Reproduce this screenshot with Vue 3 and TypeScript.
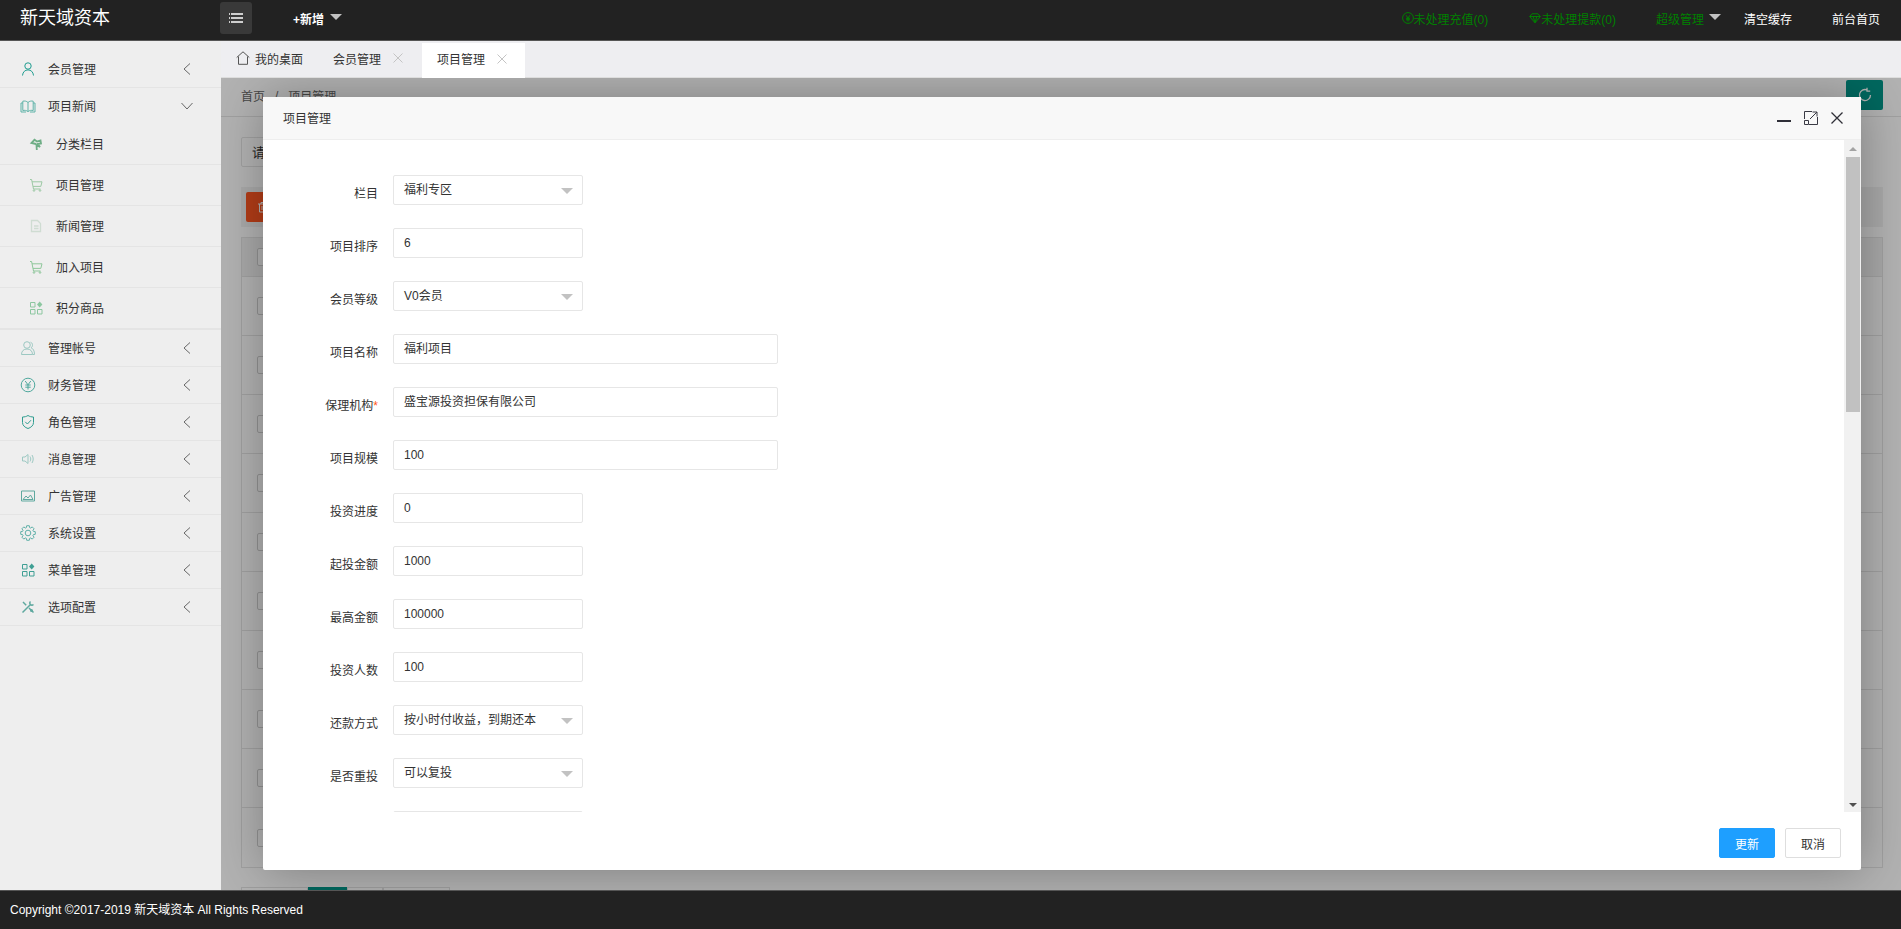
<script setup lang="ts">
interface MenuItem {
  label: string;
  icon: string;
  color: string;
}

interface FormRow {
  label: string;
  value: string;
  kind: "select" | "short" | "long";
  required?: boolean;
}

// cog outline, 8 teeth
function gearPath(): string {
  const pts: string[] = [];
  for (let i = 0; i < 8; i++) {
    const a = (i * Math.PI) / 4;
    for (const [off, r] of [[-0.3, 5.6], [-0.18, 7.4], [0.18, 7.4], [0.3, 5.6]]) {
      const x = 8 + r * Math.cos(a + off);
      const y = 8 + r * Math.sin(a + off);
      pts.push(`${x.toFixed(2)} ${y.toFixed(2)}`);
    }
  }
  return `M${pts.join("L")}z`;
}

const icons: Record<string, string> = {
  user: '<circle cx="8" cy="5" r="3.2"/><path d="M2.5 14.5c.3-3.6 2.6-5.6 5.5-5.6s5.200 2 5.500 5.600"/>',
  book: '<path d="M8 4.500C6.500 3 4.500 2.800 2.800 3.200v9.300c1.700-.4 3.700-.2 5.200 1.100 1.500-1.300 3.500-1.500 5.200-1.100V3.200C11.500 2.800 9.500 3 8 4.500zM8 4.500v9"/><path d="M2.800 5H1v9h5M13.200 5H15v9h-5"/>',
  palm: '<path d="M8 8 3.500 7l3-3.200L9 5.500 12.500 4.500 13 7.500 9.800 8 12 11 8.500 9 8.800 14" stroke-width="1.800"/>',
  cart: '<path d="M2 2.500h1.600L5.500 12h7M4 4.800h10l-1.200 4.600H5"/><circle cx="6" cy="13.500" r=".8"/><circle cx="12" cy="13.500" r=".8"/>',
  doc: '<path d="M3.500 2.500h6l3 3v8h-9zM6 8h4.500M6 10.500h4.500" stroke-width="1.300"/>',
  apps: '<path d="M2.500 2.500h4.500v4.500H2.500zM2.500 9.500h4.500V14H2.500zM9.500 9.500H14V14H9.500z"/><path d="M11.700 1.500 14.400 4.500 11.700 7.500 9 4.500z" fill="currentColor" stroke="none"/>',
  users: '<circle cx="7" cy="5" r="3.300"/><path d="M1.500 14.500c0-3.500 2.200-5.500 5.500-5.500s5.500 2 5.500 5.500zM10.500 2.200c2 .4 3 3.800 .6 5.600 2 .8 3.400 2.800 3.400 6.700h-2"/>',
  yen: '<circle cx="8" cy="8" r="6.800"/><path d="M5.200 4 8 7.800 10.800 4M8 7.800V12.500M5.300 8h5.400M5.300 10.200h5.400"/>',
  shield: '<path d="M8 1.500c1.500 1 3.500 1.500 5.500 1.500v5.500c0 3-2.500 5-5.500 6-3-1-5.500-3-5.500-6V3c2 0 4-.5 5.500-1.500z"/><path d="m5.200 7.800 2.200 2.200 3.600-3.800"/>',
  sound: '<path d="M2.500 6h2.500l3-2.500v9L5 10H2.500zM10 5.500c1 1.500 1 3.500 0 5M12 4c1.600 2.500 1.600 5.500 0 8"/>',
  image: '<path d="M1.500 3h13v10h-13z"/><path d="M3 11.500 6 8l2 2 2.500-3 2.500 4.500z"/>',
  gear: `<path d="${gearPath()}"/><circle cx="8" cy="8" r="2.800"/>`,
  tools: '<path d="m3 3 3.200 3.200M2.500 13.500l8-8M10.500 2.500c-1 1-1 2.200 0 3 .9.900 2 .9 3 0M9 9l4.500 4.500" stroke-width="1.500"/><circle cx="11.500" cy="11.500" r="1.500" fill="currentColor" stroke="none"/>',
};

const beforeGroup: MenuItem[] = [{ label: "会员管理", icon: "user", color: "#1f9d90" }];

const subItems: MenuItem[] = [
  { label: "分类栏目", icon: "palm", color: "#6fae86" },
  { label: "项目管理", icon: "cart", color: "#9cc9a4" },
  { label: "新闻管理", icon: "doc", color: "#cfdcd2" },
  { label: "加入项目", icon: "cart", color: "#8fc79b" },
  { label: "积分商品", icon: "apps", color: "#8cc7a0" },
];

const afterGroup: MenuItem[] = [
  { label: "管理帐号", icon: "users", color: "#9cc8c2" },
  { label: "财务管理", icon: "yen", color: "#4fa89d" },
  { label: "角色管理", icon: "shield", color: "#2f9d90" },
  { label: "消息管理", icon: "sound", color: "#9cc8c2" },
  { label: "广告管理", icon: "image", color: "#5fa99f" },
  { label: "系统设置", icon: "gear", color: "#5fb0a8" },
  { label: "菜单管理", icon: "apps", color: "#3f9f94" },
  { label: "选项配置", icon: "tools", color: "#5fa99f" },
];

const formRows: FormRow[] = [
  { label: "栏目", value: "福利专区", kind: "select" },
  { label: "项目排序", value: "6", kind: "short" },
  { label: "会员等级", value: "V0会员", kind: "select" },
  { label: "项目名称", value: "福利项目", kind: "long" },
  { label: "保理机构", value: "盛宝源投资担保有限公司", kind: "long", required: true },
  { label: "项目规模", value: "100", kind: "long" },
  { label: "投资进度", value: "0", kind: "short" },
  { label: "起投金额", value: "1000", kind: "short" },
  { label: "最高金额", value: "100000", kind: "short" },
  { label: "投资人数", value: "100", kind: "short" },
  { label: "还款方式", value: "按小时付收益，到期还本", kind: "select" },
  { label: "是否重投", value: "可以复投", kind: "select" },
  { label: "", value: "", kind: "short" },
];

const tableRows = Array.from({ length: 10 }, (_, i) => i);
</script>

<template>
  <div class="app">
    <header class="topbar">
      <div class="brand">新天域资本</div>
      <button class="menu-toggle">
        <svg width="16" height="12" viewBox="0 0 16 12" fill="none" stroke="#fff" stroke-width="1.500">
          <path d="M1 2h1M3 2h12M1 6h1M3 6h12M1 10h1M3 10h12" />
        </svg>
      </button>
      <div class="add-new">+新增<i class="caret" /></div>
      <div class="top-right">
        <span class="alert">
          <svg width="12" height="12" viewBox="0 0 12 12" fill="none" stroke="#008000">
            <circle cx="6" cy="6" r="5.400" />
            <path d="M4 3.200 6 6l2-2.800M6 6v3.500M4 6.300h4M4 7.800h4" />
          </svg>未处理充值(0)
        </span>
        <span class="alert second">
          <svg width="12" height="12" viewBox="0 0 12 12" fill="none" stroke="#008000">
            <path d="M3 1.800h6L11.300 4.500 6 10.800.7 4.500zM.7 4.500h10.600M4.200 4.500 6 10.800l1.800-6.300" />
          </svg>未处理提款(0)
        </span>
        <span class="admin">超级管理<i class="caret" /></span>
        <span class="plain first">清空缓存</span>
        <span class="plain">前台首页</span>
      </div>
    </header>

    <div class="main">
      <aside class="sidebar">
        <div v-for="item in beforeGroup" :key="item.label" class="nav-row first-row">
          <svg class="nav-icon" viewBox="0 0 16 16" fill="none" stroke="currentColor" :style="{ color: item.color }" v-html="icons[item.icon]" />
          <span class="nav-label">{{ item.label }}</span>
          <svg class="chevron" width="8" height="12" viewBox="0 0 8 12" fill="none" stroke="#666"><path d="M7 .5 1 6l6 5.500" /></svg>
        </div>
        <div class="nav-group">
          <div class="nav-row open">
            <svg class="nav-icon" viewBox="0 0 16 16" fill="none" stroke="#5fb3a8" v-html="icons.book" />
            <span class="nav-label">项目新闻</span>
            <svg class="chevron down" width="12" height="8" viewBox="0 0 12 8" fill="none" stroke="#666"><path d="M.5 1 6 7l5.500-6" /></svg>
          </div>
          <div v-for="item in subItems" :key="item.label" class="sub-row">
            <svg class="nav-icon" viewBox="0 0 16 16" fill="none" stroke="currentColor" :style="{ color: item.color }" v-html="icons[item.icon]" />
            <span class="nav-label">{{ item.label }}</span>
          </div>
        </div>
        <div v-for="item in afterGroup" :key="item.label" class="nav-row">
          <svg class="nav-icon" viewBox="0 0 16 16" fill="none" stroke="currentColor" :style="{ color: item.color }" v-html="icons[item.icon]" />
          <span class="nav-label">{{ item.label }}</span>
          <svg class="chevron" width="8" height="12" viewBox="0 0 8 12" fill="none" stroke="#666"><path d="M7 .5 1 6l6 5.500" /></svg>
        </div>
      </aside>

      <section class="content">
        <nav class="tabs">
          <div class="tab home">
            <svg width="14" height="14" viewBox="0 0 14 14" fill="none" stroke="#555">
              <path d="M.7 6.500 7 .8l6.300 5.700M2.500 5.500v7.800h9V5.500" />
            </svg>我的桌面
          </div>
          <div class="tab">
            会员管理
            <svg class="tab-close" width="10" height="10" viewBox="0 0 10 10" stroke="#c4c4c4"><path d="m.5 .5 9 9M9.500 .5l-9 9" /></svg>
          </div>
          <div class="tab active">
            项目管理
            <svg class="tab-close" width="10" height="10" viewBox="0 0 10 10" stroke="#c4c4c4"><path d="m.5 .5 9 9M9.500 .5l-9 9" /></svg>
          </div>
        </nav>

        <div class="frame">
          <div class="page">
            <div class="crumbs">
              <span>首页</span><span class="slash">/</span><span>项目管理</span>
              <div class="refresh">
                <svg width="16" height="16" viewBox="0 0 16 16" fill="none" stroke="#fff" stroke-width="1.300">
                  <path d="M13.500 8A5.500 5.500 0 1 1 10 2.900M10 .8v3.400h3.200" />
                </svg>
              </div>
            </div>
            <div class="search"><span>请选择</span></div>
            <div class="toolbar">
              <div class="danger">
                <svg width="12" height="12" viewBox="0 0 12 12" fill="none" stroke="#fff">
                  <path d="M1 3h10M4 3V1.500h4V3M2.500 3v8h7V3M5 5v4M7 5v4" />
                </svg>批量删除
              </div>
            </div>
            <div class="table">
              <div class="thead"><i class="check" /></div>
              <div v-for="row in tableRows" :key="row" class="trow"><i class="check" /></div>
            </div>
            <div class="pager">
              <span class="pg wide" /><span class="pg current" /><span class="pg" /><span class="pg wide" />
            </div>
          </div>

          <div class="shade" />

          <div class="dialog">
            <div class="dialog-head">
              <span class="dialog-title">项目管理</span>
              <div class="dialog-tools">
                <i class="minimize" />
                <svg width="14" height="14" viewBox="0 0 14 14" fill="none" stroke="#3a3a44">
                  <path d="M.5 8V.5H8M13.500 6v7.500H5M.5 9.500h4v4h-4zM6 8l7-7M8.500 1H13v4.500" />
                </svg>
                <svg width="12" height="12" viewBox="0 0 12 12" fill="none" stroke="#2f2f38" stroke-width="1.300">
                  <path d="m.5 .5 11 11M11.500 .5l-11 11" />
                </svg>
              </div>
            </div>
            <div class="dialog-body">
              <div class="form">
                <div v-for="(row, i) in formRows" :key="i" class="form-row">
                  <label class="form-label">{{ row.label }}<em v-if="row.required">*</em></label>
                  <div class="field" :class="row.kind">
                    {{ row.value }}
                    <i v-if="row.kind === 'select'" class="select-arrow" />
                  </div>
                </div>
              </div>
              <div class="scrollbar">
                <i class="arrow-up" />
                <div class="thumb" />
                <i class="arrow-down" />
              </div>
            </div>
            <div class="dialog-foot">
              <button class="btn primary">更新</button>
              <button class="btn">取消</button>
            </div>
          </div>
        </div>
      </section>
    </div>

    <footer class="footer">Copyright ©2017-2019 新天域资本 All Rights Reserved</footer>
  </div>
</template>

<style>
html,
body {
  margin: 0;
  overflow: hidden;
}
</style>

<style scoped>
.app {
  display: flex;
  flex-direction: column;
  height: 929px;
  overflow: hidden;
  font-family: "Liberation Sans", "Noto Sans CJK SC", sans-serif;
  font-size: 12px;
  color: #333;
}

.topbar {
  display: flex;
  align-items: center;
  flex: none;
  box-sizing: border-box;
  height: 41px;
  padding: 0 21px 4px 0;
  background: #222;
  border-bottom: 1px solid #555;
  color: #fff;
}

.brand {
  width: 220px;
  box-sizing: border-box;
  padding-left: 20px;
  font-size: 18px;
  line-height: 24px;
}

.menu-toggle {
  display: flex;
  align-items: center;
  justify-content: center;
  width: 32px;
  height: 32px;
  padding: 0;
  border: none;
  border-radius: 3px;
  background: #393939;
}

.add-new {
  display: flex;
  align-items: center;
  margin-left: 41px;
  font-weight: 700;
}

.caret {
  display: inline-block;
  width: 0;
  height: 0;
  margin: -3px 0 0 6px;
  border-style: solid;
  border-width: 6px 6px 0;
  border-color: #c2c2c2 transparent transparent;
}

.top-right {
  display: flex;
  align-items: center;
  margin-left: auto;
}

.alert {
  display: flex;
  align-items: center;
  color: #008000;
}

.alert.second {
  margin-left: 41px;
}

.admin {
  display: flex;
  align-items: center;
  margin-left: 40px;
  color: #008000;
}

.admin .caret {
  margin-left: 5px;
}

.plain {
  margin-left: 40px;
}

.plain.first {
  margin-left: 23px;
}

.main {
  display: flex;
  flex: 1;
  min-height: 0;
}

.sidebar {
  flex: none;
  box-sizing: border-box;
  width: 221px;
  padding-top: 10px;
  background: #eee;
}

.nav-row,
.sub-row {
  display: flex;
  align-items: center;
  box-sizing: border-box;
  height: 37px;
  padding: 0 30px 0 20px;
  border-bottom: 1px solid #e4e4e4;
}

.nav-row.open {
  height: 36px;
  border-bottom: none;
}

.nav-group {
  border-bottom: 1px solid #e4e4e4;
}

.sub-row {
  height: 41px;
  padding-left: 28px;
}

.nav-label {
  margin-top: -1px;
}

.nav-icon {
  flex: none;
  width: 16px;
  height: 16px;
  margin-right: 12px;
}

.chevron {
  margin-left: auto;
}

.chevron.down {
  margin-right: -2px;
}

.content {
  display: flex;
  flex: 1;
  flex-direction: column;
  min-width: 0;
}

.tabs {
  display: flex;
  flex: none;
  box-sizing: border-box;
  gap: 1px;
  height: 37px;
  background: #eeeef1;
  border-bottom: 1px solid #ddd;
}

.tab {
  display: flex;
  align-items: center;
  padding: 0 18px 2px 15px;
}

.tab.home {
  padding-right: 14px;
}

.tab.home svg {
  margin-right: 5px;
}

.tab.active {
  height: 35px;
  box-sizing: border-box;
  margin-top: 2px;
  padding-bottom: 4px;
  background: #fff;
}

.tab-close {
  margin-left: 12px;
}

.frame {
  position: relative;
  flex: 1;
  min-height: 0;
  overflow: hidden;
  background: #fff;
}

.page {
  padding: 0 18px 0 20px;
}

.crumbs {
  display: flex;
  align-items: center;
  box-sizing: border-box;
  height: 39px;
  margin: 0 -18px 0 -20px;
  padding: 0 18px 3px 20px;
  border-bottom: 1px solid #e6e6e6;
  color: #666;
}

.slash {
  margin: 0 10px;
}

.refresh {
  display: flex;
  align-items: center;
  justify-content: center;
  align-self: flex-start;
  width: 37px;
  height: 30px;
  margin-top: 2px;
  margin-left: auto;
  border-radius: 2px;
  background: #009688;
}

.search {
  display: flex;
  align-items: center;
  box-sizing: border-box;
  width: 190px;
  height: 30px;
  margin-top: 20px;
  padding: 0 0 2px 10px;
  border: 1px solid #e6e6e6;
  border-radius: 2px;
  font-size: 13px;
}

.toolbar {
  height: 40px;
  margin-top: 20px;
  padding: 5px;
  box-sizing: border-box;
  background: #f2f2f2;
}

.danger {
  display: flex;
  align-items: center;
  gap: 4px;
  box-sizing: border-box;
  width: 100px;
  height: 30px;
  padding-left: 11px;
  border-radius: 2px;
  background: #ff5722;
  color: #fff;
}

.table {
  margin-top: 10px;
  border: 1px solid #e6e6e6;
}

.thead,
.trow {
  display: flex;
  align-items: center;
  box-sizing: border-box;
  height: 59px;
  padding-left: 15px;
  border-bottom: 1px solid #e6e6e6;
}

.thead {
  height: 39px;
  background: #f2f2f2;
}

.trow:last-child {
  border-bottom: none;
}

.check {
  display: block;
  box-sizing: border-box;
  width: 18px;
  height: 18px;
  border: 1px solid #d2d2d2;
  border-radius: 2px;
  background: #fff;
}

.pager {
  display: flex;
  margin-top: 19px;
}

.pg {
  box-sizing: border-box;
  width: 36px;
  height: 30px;
  border: 1px solid #e2e2e2;
  background: #fff;
}

.pg.wide {
  width: 67px;
}

.pg.current {
  width: 39px;
  border-color: #009688;
  background: #009688;
}

.shade {
  position: absolute;
  inset: 0;
  background: rgba(0, 0, 0, 0.3);
}

.dialog {
  position: absolute;
  top: 19px;
  left: 42px;
  display: flex;
  flex-direction: column;
  width: 1598px;
  height: 773px;
  border-radius: 2px;
  background: #fff;
  box-shadow: 1px 1px 50px rgba(0, 0, 0, 0.3);
}

.dialog-head {
  display: flex;
  align-items: center;
  flex: none;
  box-sizing: border-box;
  height: 43px;
  padding: 0 18px 0 20px;
  border-bottom: 1px solid #eee;
  background: #f8f8f8;
}

.dialog-title {
  margin-top: -2px;
}

.dialog-tools {
  display: flex;
  align-items: center;
  gap: 13px;
  margin-left: auto;
}

.minimize {
  display: block;
  width: 14px;
  height: 2px;
  margin-top: 6px;
  background: #2f2f38;
}

.dialog-body {
  display: flex;
  flex: none;
  height: 672px;
  overflow: hidden;
}

.form {
  flex: 1;
  padding-top: 35px;
}

.form-row {
  display: flex;
  margin-bottom: 23px;
}

.form-label {
  box-sizing: border-box;
  width: 115px;
  margin-right: 15px;
  padding-top: 9px;
  line-height: 20px;
  text-align: right;
}

.form-label em {
  color: #ff5722;
  font-style: normal;
}

.field {
  position: relative;
  box-sizing: border-box;
  width: 190px;
  height: 30px;
  padding: 0 10px;
  border: 1px solid #e6e6e6;
  border-radius: 2px;
  line-height: 28px;
  white-space: nowrap;
}

.field.long {
  width: 385px;
}

.select-arrow {
  position: absolute;
  top: 12px;
  right: 9px;
  width: 0;
  height: 0;
  border-style: solid;
  border-width: 6px 6px 0;
  border-color: #c2c2c2 transparent transparent;
}

.scrollbar {
  display: flex;
  flex: none;
  flex-direction: column;
  align-items: center;
  box-sizing: border-box;
  width: 17px;
  padding: 7px 0 5px;
  background: #f1f1f1;
}

.thumb {
  width: 14px;
  height: 255px;
  margin-top: 6px;
  background: #c1c1c1;
}

.arrow-up,
.arrow-down {
  display: block;
  width: 0;
  height: 0;
  border-style: solid;
  border-color: transparent;
}

.arrow-up {
  border-width: 0 4px 4px;
  border-bottom-color: #a3a3a3;
}

.arrow-down {
  margin-top: auto;
  border-width: 4px 4px 0;
  border-top-color: #505050;
}

.dialog-foot {
  display: flex;
  justify-content: flex-end;
  gap: 10px;
  padding: 16px 20px 0;
}

.btn {
  box-sizing: border-box;
  width: 56px;
  height: 30px;
  padding: 0;
  border: 1px solid #dedede;
  border-radius: 2px;
  background: #fff;
  color: #333;
  font: inherit;
}

.btn.primary {
  border-color: #1e9fff;
  background: #1e9fff;
  color: #fff;
}

.footer {
  flex: none;
  box-sizing: border-box;
  height: 39px;
  padding-left: 10px;
  border-top: 1px solid #555;
  background: #222;
  color: #fff;
  line-height: 38px;
}
</style>
